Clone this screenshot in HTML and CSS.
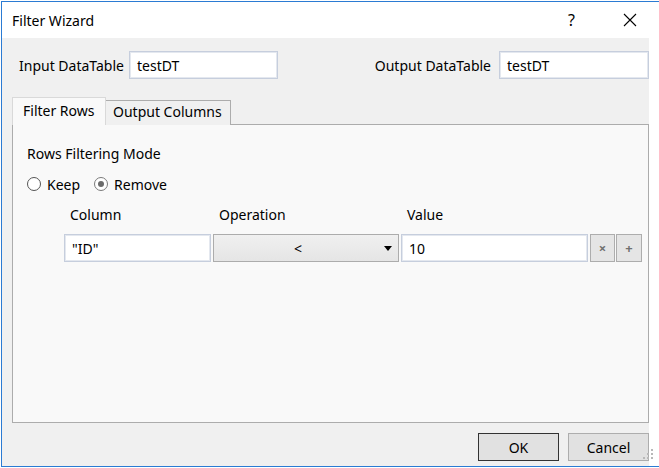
FILE: index.html
```html
<!DOCTYPE html>
<html>
<head>
<meta charset="utf-8">
<link rel="stylesheet" href="styles.css">
</head>
<body>
<div class="window">
  <div class="titlebar">
    <span class="title">Filter Wizard</span>
    <span class="help">?</span>
    <svg class="close" width="14" height="14" viewBox="0 0 14 14"><path d="M1 1 L13 13 M13 1 L1 13" stroke="#000" stroke-width="1.1" fill="none"/></svg>
  </div>
  <div class="content">
    <div class="toprow">
      <div class="field">
        <span class="label">Input DataTable</span>
        <div class="textbox tb-top">testDT</div>
      </div>
      <div class="field">
        <span class="label">Output DataTable</span>
        <div class="textbox tb-top">testDT</div>
      </div>
    </div>
    <div class="tabs">
      <div class="tab active">Filter Rows</div>
      <div class="tab">Output Columns</div>
    </div>
    <div class="panel">
      <div class="section-title">Rows Filtering Mode</div>
      <div class="radios">
        <span class="radio"><span class="circle"></span>Keep</span>
        <span class="radio"><span class="circle checked"></span>Remove</span>
      </div>
      <div class="grid heads">
        <span class="head c1">Column</span>
        <span class="head c2">Operation</span>
        <span class="head c3">Value</span>
      </div>
      <div class="grid row">
        <div class="textbox c1">"ID"</div>
        <div class="combo c2"><span class="combo-text">&lt;</span><svg class="arrow" width="8" height="5" viewBox="0 0 8 5"><path d="M0 0 H8 L4 5 Z" fill="#000"/></svg></div>
        <div class="textbox c3">10</div>
        <div class="sqbtn x">×</div>
        <div class="sqbtn plus">+</div>
      </div>
    </div>
    <div class="footer">
      <div class="btn default">OK</div>
      <div class="btn">Cancel</div>
    </div>
    <svg class="grip" width="12" height="12" viewBox="0 0 12 12">
      <rect x="9" y="1" width="2" height="2" fill="#b8b8b8"/>
      <rect x="5" y="5" width="2" height="2" fill="#b8b8b8"/>
      <rect x="9" y="5" width="2" height="2" fill="#b8b8b8"/>
      <rect x="1" y="9" width="2" height="2" fill="#b8b8b8"/>
      <rect x="5" y="9" width="2" height="2" fill="#b8b8b8"/>
      <rect x="9" y="9" width="2" height="2" fill="#b8b8b8"/>
    </svg>
  </div>
</div>
</body>
</html>
```

FILE: styles.css
```css
html, body {
  margin: 0;
  padding: 0;
  background: #ffffff;
  overflow: hidden;
  width: 659px;
  height: 468px;
}
body {
  font-family: "Noto Sans", "Open Sans", sans-serif;
  font-size: 14px;
  color: #000;
}
.window {
  box-sizing: border-box;
  margin: 1px 0 0 1px;
  width: 670px;
  height: 466px;
  border: 1px solid #2b7bd3;
  display: flex;
  flex-direction: column;
  position: relative;
}
.titlebar {
  height: 36px;
  background: #fff;
  display: flex;
  align-items: center;
  flex-shrink: 0;
  position: relative;
}
.title {
  margin-left: 10px;
  font-size: 14px;
}
.help {
  position: absolute;
  left: 566px;
  top: 7px;
  font-size: 16px;
}
.close {
  position: absolute;
  left: 621px;
  top: 11px;
}
.content {
  flex: 1;
  background: #f0f0f0;
  padding: 0 0 0 10px;
  position: relative;
  display: flex;
  flex-direction: column;
  width: 637px;
}
.toprow {
  display: flex;
  justify-content: space-between;
  margin-top: 13px;
  padding-left: 7px;
  height: 28px;
}
.field {
  display: flex;
  align-items: center;
}
.label {
  margin-right: 5px;
}
.field:last-child .label {
  margin-right: 8px;
}
.textbox {
  box-sizing: border-box;
  height: 28px;
  background: #fff;
  border: 1px solid #c6cedd;
  box-shadow: inset 0 0 0 1px #e4e8ef;
  padding-left: 7px;
  display: flex;
  align-items: center;
}
.tb-top {
  width: 149px;
}
.field:last-child .tb-top {
  width: 150px;
}
.tabs {
  display: flex;
  align-items: flex-end;
  margin-top: 18px;
  height: 28px;
  position: relative;
  z-index: 1;
  margin-bottom: -1px;
}
.tab {
  box-sizing: border-box;
  height: 25px;
  border: 1px solid #acacac;
  border-bottom: none;
  background: #f0f0f0;
  padding: 0 7px;
  display: flex;
  align-items: center;
}
.tab.active {
  height: 28px;
  width: 94px;
  background: #f9f9f9;
  border-color: #d9d9d9;
  padding-left: 10px;
  padding-bottom: 2px;
}
.tab:not(.active) {
  border-left: none;
  width: 125px;
  padding-bottom: 3px;
  height: 25px;
}
.panel {
  box-sizing: border-box;
  width: 637px;
  height: 299px;
  background: #f9f9f9;
  border: 1px solid #acacac;
  padding: 19px 0 0 14px;
}
.section-title {
  height: 20px;
  line-height: 20px;
}
.radios {
  display: flex;
  align-items: center;
  margin-top: 10px;
  height: 20px;
}
.radio {
  display: flex;
  align-items: center;
  margin-right: 14px;
}
.circle {
  box-sizing: border-box;
  width: 14px;
  height: 14px;
  border: 1px solid #555;
  border-radius: 50%;
  background: #fff;
  margin-right: 6px;
  position: relative;
}
.circle.checked {
  border-color: #7a7a7a;
}
.circle.checked::after {
  content: "";
  position: absolute;
  left: 3px;
  top: 3px;
  width: 6px;
  height: 6px;
  border-radius: 50%;
  background: #6b6b6b;
}
.grid {
  display: grid;
  grid-template-columns: 147px 186px 187px 25px 25px;
  column-gap: 2px;
  margin-left: 37px;
}
.heads {
  margin-top: 11px;
  height: 20px;
  line-height: 20px;
}
.head {
  padding-left: 6px;
}
.row {
  margin-top: 9px;
  height: 28px;
}
.row .sqbtn.plus {
  margin-left: -1px;
}
.combo {
  box-sizing: border-box;
  height: 28px;
  border: 1px solid #acacac;
  background: linear-gradient(#f0f0f0, #e5e5e5);
  display: flex;
  align-items: center;
  position: relative;
}
.combo-text {
  flex: 1;
  text-align: center;
  padding-right: 16px;
}
.arrow {
  position: absolute;
  right: 6px;
  top: 11px;
}
.sqbtn {
  box-sizing: border-box;
  height: 28px;
  border: 1px solid #adadad;
  background: #e5e5e5;
  color: #707070;
  display: flex;
  align-items: center;
  justify-content: center;
  font-weight: bold;
  font-size: 13px;
}
.footer {
  display: flex;
  justify-content: flex-end;
  margin-top: 10px;
  width: 637px;
}
.btn {
  box-sizing: border-box;
  width: 81px;
  height: 28px;
  border: 1px solid #adadad;
  background: #e1e1e1;
  display: flex;
  align-items: center;
  justify-content: center;
  margin-left: 9px;
}
.btn.default {
  border-color: #333;
}
.grip {
  position: absolute;
  left: 640px;
  top: 410px;
}
```
